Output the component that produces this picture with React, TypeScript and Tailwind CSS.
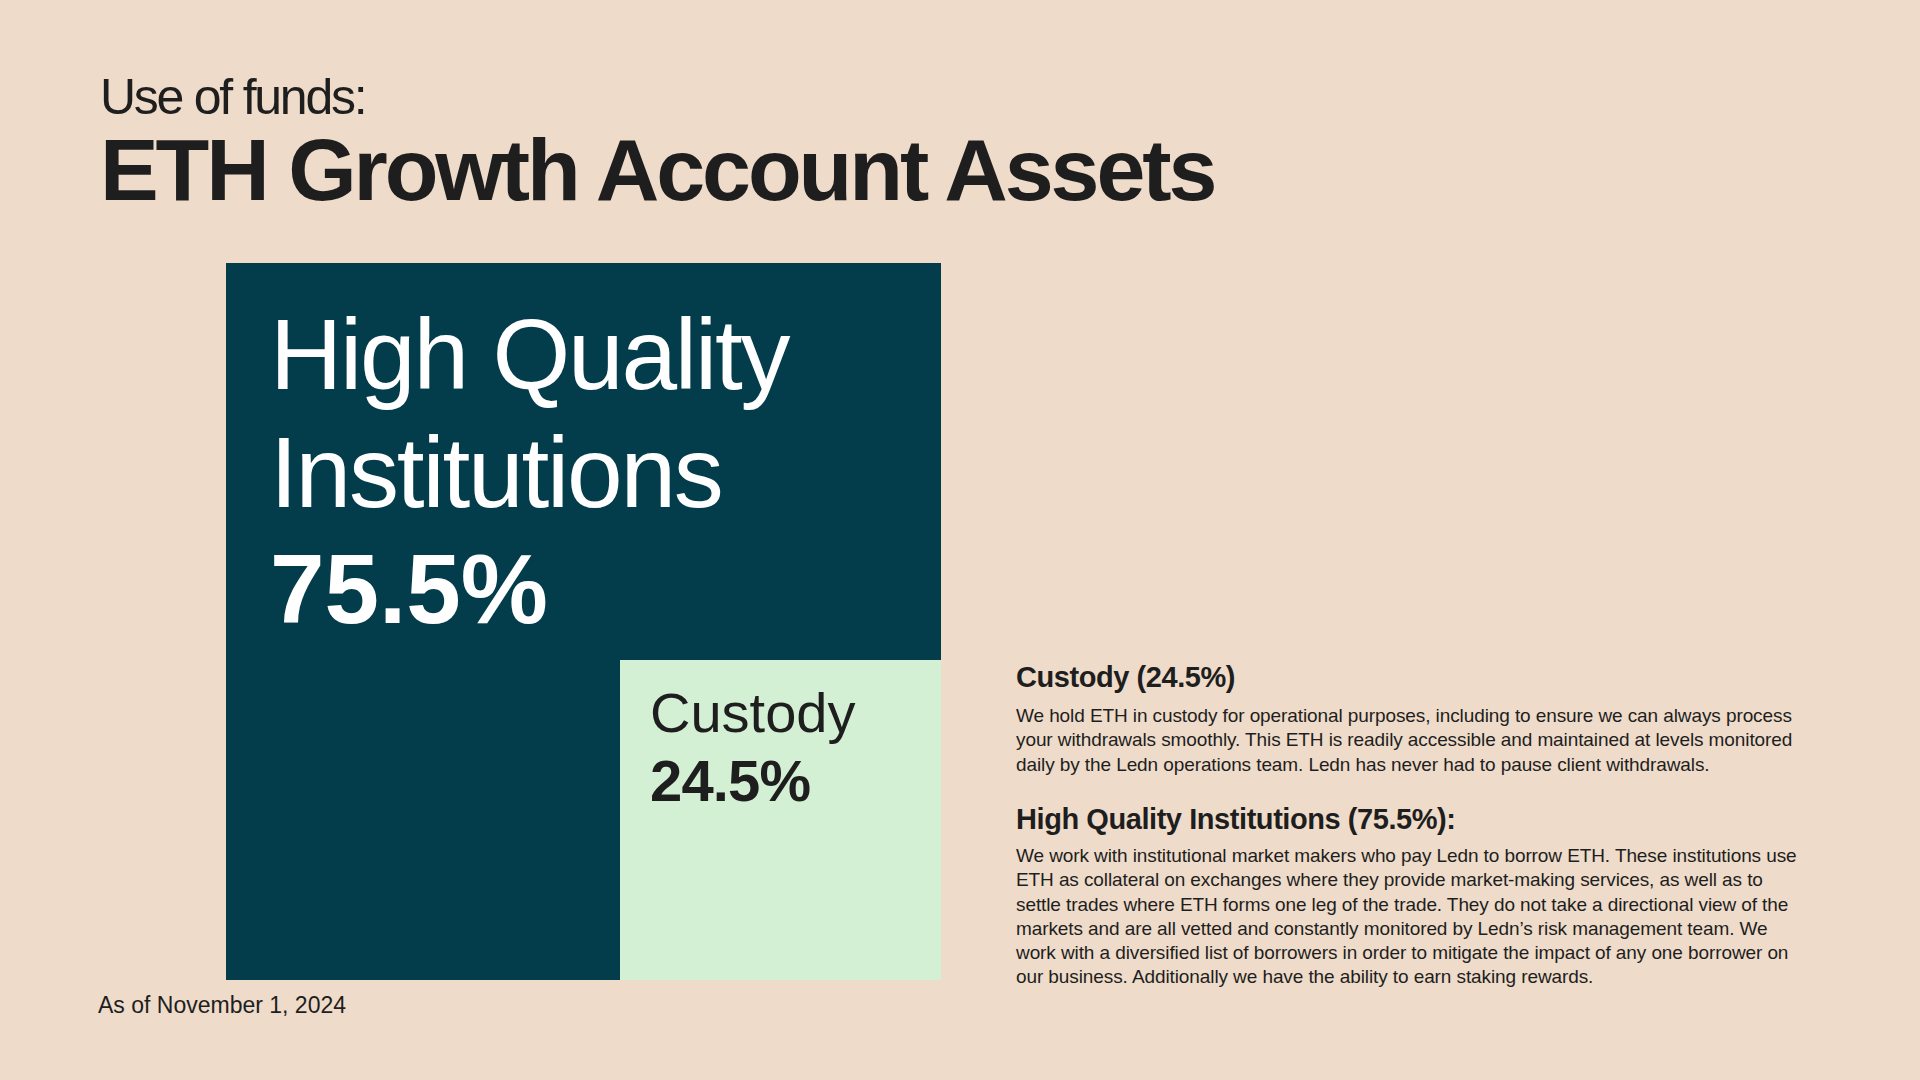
import React from "react";

const font = { fontFamily: '"Liberation Sans", Arial, sans-serif' };

const custodyLines = [
  "We hold ETH in custody for operational purposes, including to ensure we can always process",
  "your withdrawals smoothly. This ETH is readily accessible and maintained at levels monitored",
  "daily by the Ledn operations team. Ledn has never had to pause client withdrawals.",
];

const institutionLines = [
  "We work with institutional market makers who pay Ledn to borrow ETH. These institutions use",
  "ETH as collateral on exchanges where they provide market-making services, as well as to",
  "settle trades where ETH forms one leg of the trade. They do not take a directional view of the",
  "markets and are all vetted and constantly monitored by Ledn\u2019s risk management team. We",
  "work with a diversified list of borrowers in order to mitigate the impact of any one borrower on",
  "our business. Additionally we have the ability to earn staking rewards.",
];

function Section({
  title,
  lines,
  className = "",
  bodyClass = "mt-[13px] leading-[24.4px]",
}: {
  title: string;
  lines: string[];
  className?: string;
  bodyClass?: string;
}) {
  return (
    <div className={className}>
      <h3 className="text-[29px] leading-[28px] font-bold tracking-[-0.015em] text-[#1e1e1e]">
        {title}
      </h3>
      <div className={`${bodyClass} text-[19px] tracking-[-0.005em] text-[#1e1e1e]`}>
        {lines.map((l) => (
          <div key={l} className="whitespace-nowrap">
            {l}
          </div>
        ))}
      </div>
    </div>
  );
}

export default function App() {
  return (
    <div
      style={font}
      className="w-[1920px] h-[1080px] overflow-hidden bg-[#eedbc9] text-[#1e1e1e] pl-[100px] pt-[72px]"
    >
      <p className="text-[50px] leading-[50px] tracking-[-0.045em]">Use of funds:</p>
      <h1 className="mt-[4px] text-[88px] leading-[88px] font-bold tracking-[-0.035em]">
        ETH Growth Account Assets
      </h1>

      <div className="mt-[49px] flex items-start">
        <div className="flex flex-col">
          {/* treemap */}
          <div className="ml-[126px] w-[715px] h-[717px] bg-[#033c4a] flex flex-col">
            <div className="pl-[44px] pt-[32px] text-white">
              <div className="text-[100px] leading-[118px] tracking-[-0.022em]">
                High Quality
                <br />
                Institutions
              </div>
              <div className="text-[98px] leading-[116px] font-bold">75.5%</div>
            </div>
            <div className="mt-auto flex justify-end">
              <div className="w-[321px] h-[320px] bg-[#d4f0d4] pl-[30px] pt-[23px] text-[#1e1e1e]">
                <div className="text-[56px] leading-[60px]">Custody</div>
                <div className="mt-[7px] text-[58px] leading-[62px] font-bold tracking-[-0.015em]">24.5%</div>
              </div>
            </div>
          </div>
          <p className="ml-[-2px] mt-[14px] text-[23px] leading-[23px]">As of November 1, 2024</p>
        </div>

        <div className="ml-[75px] mt-[400px]">
          <Section title="Custody (24.5%)" lines={custodyLines} />
          <Section
            className="mt-[28px]"
            bodyClass="mt-[11px] leading-[24.2px]"
            title="High Quality Institutions (75.5%):"
            lines={institutionLines}
          />
        </div>
      </div>
    </div>
  );
}
